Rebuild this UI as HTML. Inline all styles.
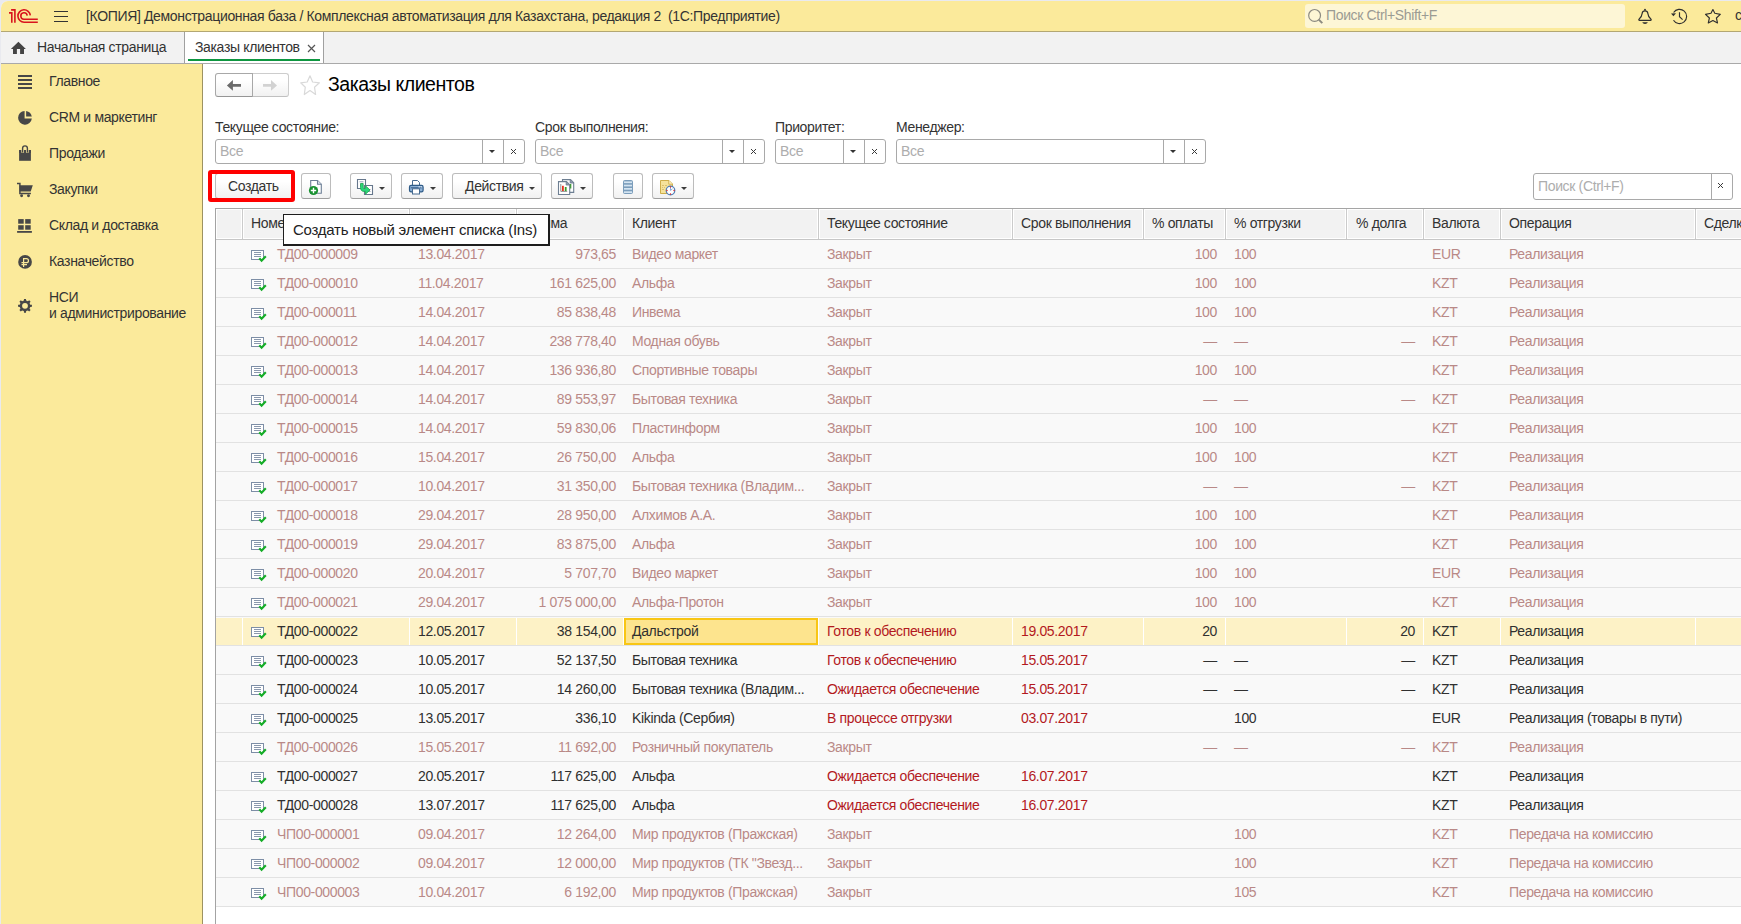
<!DOCTYPE html>
<html><head><meta charset="utf-8"><style>
*{box-sizing:border-box;margin:0;padding:0}
html,body{width:1741px;height:924px;overflow:hidden;background:#fff;font-family:"Liberation Sans",sans-serif;font-size:13.333px;color:#333}
.a{position:absolute}
.t{position:absolute;white-space:pre;line-height:16px;font-size:14px;letter-spacing:-0.35px}
.btn{position:absolute;top:173px;height:26px;border:1px solid #bcbcbc;border-bottom-color:#9f9f9f;border-radius:3px;background:linear-gradient(#ffffff 30%,#f1f1f1)}
.dd{position:absolute;width:0;height:0;border-left:3px solid transparent;border-right:3px solid transparent;border-top:3px solid #3c3c3c}
.fld{position:absolute;top:139px;height:25px;border:1px solid #a9a9a9;border-radius:3px;background:#fff}
.sep{position:absolute;top:0;width:1px;height:23px;background:#a9a9a9}
</style></head><body>
<div class="a" style="left:0;top:0;width:1741px;height:924px;background:#e9eaef"></div>
<div class="a" style="left:1px;top:1px;width:1740px;height:923px;background:#fff;border-top-left-radius:7px;overflow:hidden">
</div>
<div class="a" style="left:1px;top:1px;width:1740px;height:31px;background:#fbea9b;border-bottom:1px solid #b3a773;border-top-left-radius:7px"></div>
<svg class="a" style="left:0;top:0" width="70" height="31">
 <g fill="none" stroke="#d9141d" stroke-width="1.6">
  <path d="M9,12.9 H11.8 V22.8"/>
  <path d="M11.1,9.9 H14.9 V22.8"/>
  <path d="M30.3,15.4 A6.2,6.2 0 1 0 24.2,22.2 H37.8"/>
  <path d="M27.2,15.6 A3.2,3.2 0 1 0 24.2,19.2 H37.8"/>
 </g>
 <path d="M54,11.5 H68 M54,16.5 H68 M54,21.5 H68" stroke="#333" stroke-width="1"/>
</svg>
<div class="t" style="left:86px;top:8px;color:#333">[КОПИЯ] Демонстрационная база / Комплексная автоматизация для Казахстана, редакция 2  (1С:Предприятие)</div>
<div class="a" style="left:1305px;top:4px;width:320px;height:24px;background:#fdf6d6;border-radius:3px"></div>
<svg class="a" style="left:1300px;top:0" width="30" height="31"><circle cx="14.6" cy="15.4" r="5.9" fill="none" stroke="#8c8a80" stroke-width="1.2"/><path d="M18.8,19.6 L22.3,23.1" stroke="#8c8a80" stroke-width="2"/></svg>
<div class="t" style="left:1326px;top:7px;color:#9b9b93">Поиск Ctrl+Shift+F</div>
<svg class="a" style="left:1630px;top:0" width="111" height="31">
 <path d="M15,10.9 C13,10.9 12.3,11.8 12.1,13.6 C11.9,16 11.1,17.3 9.2,19 C8.5,19.6 8.7,20.3 9.6,20.3 H20.4 C21.3,20.3 21.5,19.6 20.8,19 C18.9,17.3 18.1,16 17.9,13.6 C17.7,11.8 17,10.9 15,10.9 Z" fill="none" stroke="#2f2f2f" stroke-width="1.15"/>
 <circle cx="15" cy="9.8" r="0.95" fill="#2f2f2f"/>
 <path d="M12.3,22.3 H17.8 C17.3,23.4 16.3,23.9 15,23.9 C13.7,23.9 12.8,23.4 12.3,22.3 Z" fill="#2f2f2f"/>
 <path d="M43.6,12.55 A7.1,7.1 0 1 1 43.5,20.2" fill="none" stroke="#2f2f2f" stroke-width="1.15"/>
 <path d="M41,13.6 L46,13.2 L43.4,16.3 Z" fill="#2f2f2f"/>
 <path d="M49.5,12.2 V16.8 L52.6,19.6" fill="none" stroke="#2f2f2f" stroke-width="1.15"/>
 <path d="M82.9,9.6 L84.8,13.3 L90.3,14.4 L86.4,18 L87.5,22.9 L82.9,20.6 L78.3,22.9 L79.4,18 L75.5,14.4 L81,13.3 Z" fill="none" stroke="#2f2f2f" stroke-width="1.15" stroke-linejoin="round"/>
</svg>
<div class="t" style="left:1735px;top:7px;color:#333">с</div>
<div class="a" style="left:1px;top:32px;width:1740px;height:32px;background:#f2f2f2;border-bottom:1px solid #a9a9a9"></div>
<svg class="a" style="left:0;top:32px" width="30" height="31"><path d="M18.4,9.8 L25.9,16.9 H24 V21.9 H20.1 V16.9 H16.9 V21.9 H13 V16.9 H10.9 Z" fill="#444"/></svg>
<div class="t" style="left:37px;top:39px;color:#333">Начальная страница</div>
<div class="a" style="left:184px;top:32px;width:140px;height:31px;background:#fff;border-left:1px solid #a0a0a0;border-right:1px solid #a0a0a0"></div>
<div class="a" style="left:188px;top:59px;width:132px;height:2px;background:#0e9640"></div>
<div class="t" style="left:195px;top:39px;color:#333">Заказы клиентов</div>
<svg class="a" style="left:304px;top:41px" width="14" height="14"><path d="M4,4 L11,11 M11,4 L4,11" stroke="#555" stroke-width="1.2"/></svg>
<div class="a" style="left:1px;top:64px;width:202px;height:860px;background:#fbea9b;border-right:1px solid #9d9261"></div>
<div class="t" style="left:49px;top:73px;color:#333">Главное</div>
<div class="t" style="left:49px;top:109px;color:#333">CRM и маркетинг</div>
<div class="t" style="left:49px;top:145px;color:#333">Продажи</div>
<div class="t" style="left:49px;top:181px;color:#333">Закупки</div>
<div class="t" style="left:49px;top:217px;color:#333">Склад и доставка</div>
<div class="t" style="left:49px;top:253px;color:#333">Казначейство</div>
<div class="t" style="left:49px;top:289px;color:#333">НСИ</div>
<div class="t" style="left:49px;top:305px;color:#333">и администрирование</div>
<svg class="a" style="left:0;top:64px" width="40" height="260">
 <g fill="#474747">
  <rect x="18" y="11" width="14" height="2"/><rect x="18" y="15" width="14" height="2"/><rect x="18" y="19" width="14" height="2"/><rect x="18" y="23" width="14" height="2"/>
  <path d="M24.6,46.91 V54.6 H31.85 A6.9,6.9 0 1 1 24.6,46.91 Z"/>
  <path d="M26.1,46.99 A6.9,6.9 0 0 1 31.79,52.6 H26.1 Z"/>
  <rect x="19.1" y="86" width="11.8" height="10.8"/>
 </g>
 <path d="M22.6,88.8 V84.3 A2.4,2.4 0 0 1 27.4,84.3 V88.8" fill="none" stroke="#fbea9b" stroke-width="3.4"/>
 <path d="M22.6,88.6 V84.3 A2.4,2.4 0 0 1 27.4,84.3 V88.6" fill="none" stroke="#474747" stroke-width="1.4"/>
 <rect x="19.1" y="86" width="2.2" height="3" fill="#474747"/><rect x="28.7" y="86" width="2.2" height="3" fill="#474747"/><rect x="24.1" y="86" width="1.8" height="3" fill="#474747"/>
 <g fill="#474747">
  <polygon points="19.6,121.3 32.8,121.3 30.7,127.6 19.6,127.6"/>
  <circle cx="21.6" cy="131.7" r="1.45"/><circle cx="28.5" cy="131.7" r="1.45"/>
  <rect x="18.2" y="155.1" width="5.5" height="4.6"/><rect x="25.2" y="155.1" width="5.5" height="4.6"/><rect x="18.2" y="161.2" width="5.5" height="4.5"/><rect x="25.2" y="161.2" width="5.5" height="4.5"/>
  <rect x="17.1" y="167" width="14.8" height="1.8"/>
  <circle cx="25.05" cy="197.95" r="6.85"/>
  <path fill-rule="evenodd" d="M30.27,240.69 L31.93,240.86 L31.93,242.84 L30.27,243.01 L29.55,244.76 L30.60,246.05 L29.20,247.45 L27.91,246.40 L26.16,247.12 L25.99,248.78 L24.01,248.78 L23.84,247.12 L22.09,246.40 L20.80,247.45 L19.40,246.05 L20.45,244.76 L19.73,243.01 L18.07,242.84 L18.07,240.86 L19.73,240.69 L20.45,238.94 L19.40,237.65 L20.80,236.25 L22.09,237.30 L23.84,236.58 L24.01,234.92 L25.99,234.92 L26.16,236.58 L27.91,237.30 L29.20,236.25 L30.60,237.65 L29.55,238.94 Z M27.9,241.85 A2.9,2.9 0 1 0 22.1,241.85 A2.9,2.9 0 1 0 27.9,241.85 Z"/>
 </g>
 <path d="M17,119.6 H19.9 V129.6 H30.9" fill="none" stroke="#474747" stroke-width="1.5"/>
 <path d="M23.6,202.9 V194.6 H26.4 A2.05,2.05 0 0 1 26.4,198.7 H21.5 M21.5,200.7 H27" fill="none" stroke="#fbea9b" stroke-width="1.2"/>
</svg>
<div class="btn" style="left:215px;top:73px;width:38px;height:24px;border-color:#a8a8a8;border-bottom-color:#959595;border-radius:3px 0 0 3px"></div>
<div class="btn" style="left:252px;top:73px;width:37px;height:24px;border-color:#cdcdcd;border-bottom-color:#c0c0c0;border-left:none;border-radius:0 3px 3px 0"></div>
<div class="a" style="left:252px;top:73px;width:1px;height:24px;background:#a8a8a8"></div>
<svg class="a" style="left:215px;top:73px" width="80" height="24">
 <path d="M11.9,12.4 L17.9,7.1 V11 H26 V13.8 H17.9 V17.7 Z" fill="#6b6b6b"/>
 <path d="M62,12.4 L56,7.1 V11 H48 V13.8 H56 V17.7 Z" fill="#d2d2d2"/>
</svg>
<svg class="a" style="left:298px;top:73px" width="24" height="24"><path d="M12,2.8 L14.6,9 L21.4,9.8 L16.5,14.2 L17.6,21.5 L12,17.5 L6.3,21.5 L7.3,14.2 L2.7,9.8 L9.2,9 Z" fill="none" stroke="#d9d9d9" stroke-width="1.2" stroke-linejoin="round"/></svg>
<div class="t" style="left:328px;top:73px;font-size:19.5px;letter-spacing:-0.45px;line-height:22px;color:#000">Заказы клиентов</div>
<div class="t" style="left:215px;top:119px;color:#333">Текущее состояние:</div>
<div class="t" style="left:535px;top:119px;color:#333">Срок выполнения:</div>
<div class="t" style="left:775px;top:119px;color:#333">Приоритет:</div>
<div class="t" style="left:896px;top:119px;color:#333">Менеджер:</div>
<div class="fld" style="left:215px;width:310px"><div class="sep" style="left:266px"></div><div class="sep" style="left:287px"></div></div>
<div class="t" style="left:220px;top:143px;color:#adadad">Все</div>
<div class="dd" style="left:489px;top:150px;border-left-width:3.5px;border-right-width:3.5px;border-top-width:3.5px;border-top-color:#333"></div>
<svg class="a" style="left:508px;top:146px" width="12" height="12"><path d="M3,3 L8,8 M8,3 L3,8" stroke="#3a3a3a" stroke-width="1"/></svg>
<div class="fld" style="left:535px;width:230px"><div class="sep" style="left:186px"></div><div class="sep" style="left:207px"></div></div>
<div class="t" style="left:540px;top:143px;color:#adadad">Все</div>
<div class="dd" style="left:729px;top:150px;border-left-width:3.5px;border-right-width:3.5px;border-top-width:3.5px;border-top-color:#333"></div>
<svg class="a" style="left:748px;top:146px" width="12" height="12"><path d="M3,3 L8,8 M8,3 L3,8" stroke="#3a3a3a" stroke-width="1"/></svg>
<div class="fld" style="left:775px;width:111px"><div class="sep" style="left:67px"></div><div class="sep" style="left:88px"></div></div>
<div class="t" style="left:780px;top:143px;color:#adadad">Все</div>
<div class="dd" style="left:850px;top:150px;border-left-width:3.5px;border-right-width:3.5px;border-top-width:3.5px;border-top-color:#333"></div>
<svg class="a" style="left:869px;top:146px" width="12" height="12"><path d="M3,3 L8,8 M8,3 L3,8" stroke="#3a3a3a" stroke-width="1"/></svg>
<div class="fld" style="left:896px;width:310px"><div class="sep" style="left:266px"></div><div class="sep" style="left:287px"></div></div>
<div class="t" style="left:901px;top:143px;color:#adadad">Все</div>
<div class="dd" style="left:1170px;top:150px;border-left-width:3.5px;border-right-width:3.5px;border-top-width:3.5px;border-top-color:#333"></div>
<svg class="a" style="left:1189px;top:146px" width="12" height="12"><path d="M3,3 L8,8 M8,3 L3,8" stroke="#3a3a3a" stroke-width="1"/></svg>
<div class="btn" style="left:215px;width:79px"></div>
<div class="t" style="left:228px;top:178px;color:#333">Создать</div>
<div class="btn" style="left:301px;width:30px"></div>
<svg class="a" style="left:301px;top:173px" width="30" height="26">
 <path d="M9.7,7.5 H16.5 L20.3,11.3 V20.3 H9.7 Z" fill="#fff" stroke="#6d7f96" stroke-width="1.1"/>
 <path d="M16.5,7.5 V11.3 H20.3" fill="#dfe5ee" stroke="#6d7f96" stroke-width="1.1"/>
 <circle cx="12.5" cy="17.5" r="4.6" fill="#17912f"/>
 <path d="M12.5,14.8 V20.2 M9.8,17.5 H15.2" stroke="#fff" stroke-width="1.4"/>
</svg>
<div class="btn" style="left:350px;width:42px"></div>
<svg class="a" style="left:350px;top:173px" width="42" height="26">
 <path d="M7.5,6.5 H15.5 V15.5 H7.5 Z" fill="#fff" stroke="#66778c" stroke-width="1.1"/>
 <path d="M9.5,8.8 H13.5" stroke="#8a9ab0" stroke-width="0.9"/>
 <path d="M14.5,12.5 H22.5 V21.5 H14.5 Z" fill="#fff" stroke="#66778c" stroke-width="1.1"/>
 <path d="M17,16.5 H20.5 M17,18.5 H20.5" stroke="#8a9ab0" stroke-width="0.9"/>
 <path d="M10.5,10.5 H13.2 V14 C13.2,15 13.8,15.5 14.6,15.5 H15.5 V12.8 L20,17 L15.5,21.2 V18.4 H14 C11.8,18.4 10.5,17 10.5,14.5 Z" fill="#2bd67a" stroke="#16a24a" stroke-width="0.8"/>
</svg>
<div class="dd" style="left:379px;top:187px"></div>
<div class="btn" style="left:401px;width:42px"></div>
<svg class="a" style="left:401px;top:173px" width="42" height="26">
 <path d="M11.5,7.5 H16.5 L18.5,9.5 V12.5 H11.5 Z" fill="#fff" stroke="#466a90" stroke-width="1"/>
 <rect x="8.5" y="12.3" width="13.6" height="6.6" rx="1.6" fill="#8cb0d6" stroke="#2f5b87" stroke-width="1.2"/>
 <path d="M9.8,14.8 H20.8" stroke="#2f5b87" stroke-width="1"/>
 <rect x="17.6" y="13.4" width="1.2" height="1" fill="#fff"/><rect x="19.6" y="13.4" width="1.2" height="1" fill="#fff"/>
 <rect x="11.5" y="15.8" width="7" height="5.2" fill="#fff" stroke="#466a90" stroke-width="1"/>
</svg>
<div class="dd" style="left:430px;top:187px"></div>
<div class="btn" style="left:452px;width:90px"></div>
<div class="t" style="left:465px;top:178px;color:#333">Действия</div>
<div class="dd" style="left:529px;top:187px"></div>
<div class="btn" style="left:551px;width:42px"></div>
<svg class="a" style="left:551px;top:173px" width="42" height="26">
 <path d="M11.5,6.6 H19.5 L22.7,9.8 V19.4 H11.5 Z" fill="#fff" stroke="#6e7f92" stroke-width="1.1"/>
 <path d="M19.2,6.6 V10 H22.7" fill="#8b9aab" stroke="#6e7f92" stroke-width="0.9"/>
 <rect x="18.5" y="11" width="1.8" height="4.5" fill="#3aa02a"/>
 <path d="M7.5,8.6 H15.5 L18.7,11.8 V21.5 H7.5 Z" fill="#fff" stroke="#6e7f92" stroke-width="1.1"/>
 <path d="M15.2,8.6 V12 H18.7" fill="#8b9aab" stroke="#6e7f92" stroke-width="0.9"/>
 <path d="M9.8,11 V18.4 H16.2" fill="none" stroke="#777" stroke-width="0.8"/>
 <rect x="11" y="12.8" width="1.8" height="5.2" fill="#e8321e"/>
 <rect x="13.8" y="14" width="1.8" height="4" fill="#3aa02a"/>
</svg>
<div class="dd" style="left:580px;top:187px"></div>
<div class="btn" style="left:613px;width:30px"></div>
<svg class="a" style="left:613px;top:173px" width="30" height="26">
 <rect x="10" y="7" width="10" height="14" rx="2" fill="#7b9dbb"/>
 <g fill="#d4e4f1"><rect x="11" y="8.4" width="8" height="1.7"/><rect x="11" y="11.7" width="8" height="1.7"/><rect x="11" y="15" width="8" height="1.7"/><rect x="11" y="18.3" width="8" height="1.7"/></g>
</svg>
<div class="btn" style="left:652px;width:42px"></div>
<svg class="a" style="left:652px;top:173px" width="42" height="26">
 <path d="M8.5,7.5 H17 L20.5,11 V20.5 H8.5 Z" fill="#f6e39a" stroke="#cfae4a" stroke-width="1"/>
 <path d="M16.8,7.5 V11.2 H20.5" fill="#fff4c8" stroke="#cfae4a" stroke-width="0.9"/>
 <path d="M10,12.5 H12 M13,12.5 H15 M10,14.5 H11 M12,14.5 H13 M10,16.5 H12" stroke="#d2b866" stroke-width="0.8"/>
 <circle cx="18.5" cy="17.5" r="4.3" fill="#fff" stroke="#4f7fb8" stroke-width="1.2"/>
 <path d="M18.5,14.5 V17.5 L20.5,15.8" stroke="#7fa0d0" stroke-width="0.9" fill="none"/>
 <g fill="#e01b1b"><circle cx="18.5" cy="14" r="0.7"/><circle cx="18.5" cy="21" r="0.7"/><circle cx="15" cy="17.5" r="0.7"/><circle cx="22" cy="17.5" r="0.7"/></g>
</svg>
<div class="dd" style="left:681px;top:187px"></div>
<div class="fld" style="left:1533px;top:173px;width:200px;height:27px"><div class="sep" style="left:177px;height:25px"></div></div>
<div class="t" style="left:1538px;top:178px;color:#adadad">Поиск (Ctrl+F)</div>
<svg class="a" style="left:1715px;top:180px" width="12" height="12"><path d="M3,3 L8,8 M8,3 L3,8" stroke="#3a3a3a" stroke-width="1"/></svg>
<div class="a" style="left:208px;top:170px;width:87px;height:32px;border:4px solid #ff0000;border-radius:3px"></div>
<div class="a" style="left:215px;top:208px;width:1526px;height:716px;border-left:1px solid #a3a3a3"></div>
<div class="a" style="left:216px;top:208px;width:1525px;height:32px;background:#fff;border-top:1px solid #a5a5a5;border-bottom:1px solid #c6c6c6"></div>
<div class="a" style="left:217px;top:210px;width:24px;height:28px;background:#f2f2f2"></div>
<div class="a" style="left:244px;top:210px;width:164px;height:28px;background:#f2f2f2"></div>
<div class="a" style="left:411px;top:210px;width:104px;height:28px;background:#f2f2f2"></div>
<div class="a" style="left:518px;top:210px;width:104px;height:28px;background:#f2f2f2"></div>
<div class="a" style="left:625px;top:210px;width:192px;height:28px;background:#f2f2f2"></div>
<div class="a" style="left:820px;top:210px;width:191px;height:28px;background:#f2f2f2"></div>
<div class="a" style="left:1014px;top:210px;width:128px;height:28px;background:#f2f2f2"></div>
<div class="a" style="left:1145px;top:210px;width:79px;height:28px;background:#f2f2f2"></div>
<div class="a" style="left:1227px;top:210px;width:118px;height:28px;background:#f2f2f2"></div>
<div class="a" style="left:1348px;top:210px;width:74px;height:28px;background:#f2f2f2"></div>
<div class="a" style="left:1425px;top:210px;width:74px;height:28px;background:#f2f2f2"></div>
<div class="a" style="left:1502px;top:210px;width:192px;height:28px;background:#f2f2f2"></div>
<div class="a" style="left:1697px;top:210px;width:45px;height:28px;background:#f2f2f2"></div>
<div class="a" style="left:242px;top:209px;width:1px;height:30px;background:#cbcbcb"></div>
<div class="a" style="left:409px;top:209px;width:1px;height:30px;background:#cbcbcb"></div>
<div class="a" style="left:516px;top:209px;width:1px;height:30px;background:#cbcbcb"></div>
<div class="a" style="left:623px;top:209px;width:1px;height:30px;background:#cbcbcb"></div>
<div class="a" style="left:818px;top:209px;width:1px;height:30px;background:#cbcbcb"></div>
<div class="a" style="left:1012px;top:209px;width:1px;height:30px;background:#cbcbcb"></div>
<div class="a" style="left:1143px;top:209px;width:1px;height:30px;background:#cbcbcb"></div>
<div class="a" style="left:1225px;top:209px;width:1px;height:30px;background:#cbcbcb"></div>
<div class="a" style="left:1346px;top:209px;width:1px;height:30px;background:#cbcbcb"></div>
<div class="a" style="left:1423px;top:209px;width:1px;height:30px;background:#cbcbcb"></div>
<div class="a" style="left:1500px;top:209px;width:1px;height:30px;background:#cbcbcb"></div>
<div class="a" style="left:1695px;top:209px;width:1px;height:30px;background:#cbcbcb"></div>
<div class="t" style="left:251px;top:215px;color:#333">Номер</div>
<div class="t" style="left:418px;top:215px;color:#333">Дата</div>
<div class="t" style="left:525px;top:215px;color:#333">Сумма</div>
<div class="t" style="left:632px;top:215px;color:#333">Клиент</div>
<div class="t" style="left:827px;top:215px;color:#333">Текущее состояние</div>
<div class="t" style="left:1021px;top:215px;color:#333">Срок выполнения</div>
<div class="t" style="left:1152px;top:215px;color:#333">% оплаты</div>
<div class="t" style="left:1234px;top:215px;color:#333">% отгрузки</div>
<div class="t" style="left:1356px;top:215px;color:#333">% долга</div>
<div class="t" style="left:1432px;top:215px;color:#333">Валюта</div>
<div class="t" style="left:1509px;top:215px;color:#333">Операция</div>
<div class="t" style="left:1704px;top:215px;color:#333">Сделка</div>
<div class="a" style="left:216px;top:240px;width:1525px;height:29px;background:#f9f9f9;border-bottom:1px solid #e2e2e2"></div>
<svg class="a" style="left:250px;top:249px" width="18" height="14">
 <rect x="1.5" y="1.5" width="12" height="9" fill="#fff" stroke="#7d8ea6" stroke-width="1"/>
 <path d="M4,3.5 H11 M4,5.5 H11 M4,7.5 H11" stroke="#8a98ad" stroke-width="1"/>
 <path d="M9.3,9.3 L11.6,11.8 L15.8,7.2" fill="none" stroke="#15ad27" stroke-width="2.1"/>
</svg>
<div class="t" style="left:277px;top:246px;color:#b98987">ТД00-000009</div>
<div class="t" style="left:418px;top:246px;color:#b98987">13.04.2017</div>
<div class="t" style="right:1125px;top:246px;text-align:right;color:#b98987">973,65</div>
<div class="t" style="left:632px;top:246px;color:#b98987">Видео маркет</div>
<div class="t" style="left:827px;top:246px;color:#b98987">Закрыт</div>
<div class="t" style="left:1021px;top:246px;color:#b98987"></div>
<div class="t" style="right:524px;top:246px;text-align:right;color:#b98987">100</div>
<div class="t" style="left:1234px;top:246px;color:#b98987">100</div>
<div class="t" style="right:326px;top:246px;text-align:right;color:#b98987"></div>
<div class="t" style="left:1432px;top:246px;color:#b98987">EUR</div>
<div class="t" style="left:1509px;top:246px;color:#b98987">Реализация</div>
<div class="a" style="left:216px;top:269px;width:1525px;height:29px;background:#f9f9f9;border-bottom:1px solid #e2e2e2"></div>
<svg class="a" style="left:250px;top:278px" width="18" height="14">
 <rect x="1.5" y="1.5" width="12" height="9" fill="#fff" stroke="#7d8ea6" stroke-width="1"/>
 <path d="M4,3.5 H11 M4,5.5 H11 M4,7.5 H11" stroke="#8a98ad" stroke-width="1"/>
 <path d="M9.3,9.3 L11.6,11.8 L15.8,7.2" fill="none" stroke="#15ad27" stroke-width="2.1"/>
</svg>
<div class="t" style="left:277px;top:275px;color:#b98987">ТД00-000010</div>
<div class="t" style="left:418px;top:275px;color:#b98987">11.04.2017</div>
<div class="t" style="right:1125px;top:275px;text-align:right;color:#b98987">161 625,00</div>
<div class="t" style="left:632px;top:275px;color:#b98987">Альфа</div>
<div class="t" style="left:827px;top:275px;color:#b98987">Закрыт</div>
<div class="t" style="left:1021px;top:275px;color:#b98987"></div>
<div class="t" style="right:524px;top:275px;text-align:right;color:#b98987">100</div>
<div class="t" style="left:1234px;top:275px;color:#b98987">100</div>
<div class="t" style="right:326px;top:275px;text-align:right;color:#b98987"></div>
<div class="t" style="left:1432px;top:275px;color:#b98987">KZT</div>
<div class="t" style="left:1509px;top:275px;color:#b98987">Реализация</div>
<div class="a" style="left:216px;top:298px;width:1525px;height:29px;background:#f9f9f9;border-bottom:1px solid #e2e2e2"></div>
<svg class="a" style="left:250px;top:307px" width="18" height="14">
 <rect x="1.5" y="1.5" width="12" height="9" fill="#fff" stroke="#7d8ea6" stroke-width="1"/>
 <path d="M4,3.5 H11 M4,5.5 H11 M4,7.5 H11" stroke="#8a98ad" stroke-width="1"/>
 <path d="M9.3,9.3 L11.6,11.8 L15.8,7.2" fill="none" stroke="#15ad27" stroke-width="2.1"/>
</svg>
<div class="t" style="left:277px;top:304px;color:#b98987">ТД00-000011</div>
<div class="t" style="left:418px;top:304px;color:#b98987">14.04.2017</div>
<div class="t" style="right:1125px;top:304px;text-align:right;color:#b98987">85 838,48</div>
<div class="t" style="left:632px;top:304px;color:#b98987">Инвема</div>
<div class="t" style="left:827px;top:304px;color:#b98987">Закрыт</div>
<div class="t" style="left:1021px;top:304px;color:#b98987"></div>
<div class="t" style="right:524px;top:304px;text-align:right;color:#b98987">100</div>
<div class="t" style="left:1234px;top:304px;color:#b98987">100</div>
<div class="t" style="right:326px;top:304px;text-align:right;color:#b98987"></div>
<div class="t" style="left:1432px;top:304px;color:#b98987">KZT</div>
<div class="t" style="left:1509px;top:304px;color:#b98987">Реализация</div>
<div class="a" style="left:216px;top:327px;width:1525px;height:29px;background:#f9f9f9;border-bottom:1px solid #e2e2e2"></div>
<svg class="a" style="left:250px;top:336px" width="18" height="14">
 <rect x="1.5" y="1.5" width="12" height="9" fill="#fff" stroke="#7d8ea6" stroke-width="1"/>
 <path d="M4,3.5 H11 M4,5.5 H11 M4,7.5 H11" stroke="#8a98ad" stroke-width="1"/>
 <path d="M9.3,9.3 L11.6,11.8 L15.8,7.2" fill="none" stroke="#15ad27" stroke-width="2.1"/>
</svg>
<div class="t" style="left:277px;top:333px;color:#b98987">ТД00-000012</div>
<div class="t" style="left:418px;top:333px;color:#b98987">14.04.2017</div>
<div class="t" style="right:1125px;top:333px;text-align:right;color:#b98987">238 778,40</div>
<div class="t" style="left:632px;top:333px;color:#b98987">Модная обувь</div>
<div class="t" style="left:827px;top:333px;color:#b98987">Закрыт</div>
<div class="t" style="left:1021px;top:333px;color:#b98987"></div>
<div class="t" style="right:524px;top:333px;text-align:right;color:#b98987">—</div>
<div class="t" style="left:1234px;top:333px;color:#b98987">—</div>
<div class="t" style="right:326px;top:333px;text-align:right;color:#b98987">—</div>
<div class="t" style="left:1432px;top:333px;color:#b98987">KZT</div>
<div class="t" style="left:1509px;top:333px;color:#b98987">Реализация</div>
<div class="a" style="left:216px;top:356px;width:1525px;height:29px;background:#f9f9f9;border-bottom:1px solid #e2e2e2"></div>
<svg class="a" style="left:250px;top:365px" width="18" height="14">
 <rect x="1.5" y="1.5" width="12" height="9" fill="#fff" stroke="#7d8ea6" stroke-width="1"/>
 <path d="M4,3.5 H11 M4,5.5 H11 M4,7.5 H11" stroke="#8a98ad" stroke-width="1"/>
 <path d="M9.3,9.3 L11.6,11.8 L15.8,7.2" fill="none" stroke="#15ad27" stroke-width="2.1"/>
</svg>
<div class="t" style="left:277px;top:362px;color:#b98987">ТД00-000013</div>
<div class="t" style="left:418px;top:362px;color:#b98987">14.04.2017</div>
<div class="t" style="right:1125px;top:362px;text-align:right;color:#b98987">136 936,80</div>
<div class="t" style="left:632px;top:362px;color:#b98987">Спортивные товары</div>
<div class="t" style="left:827px;top:362px;color:#b98987">Закрыт</div>
<div class="t" style="left:1021px;top:362px;color:#b98987"></div>
<div class="t" style="right:524px;top:362px;text-align:right;color:#b98987">100</div>
<div class="t" style="left:1234px;top:362px;color:#b98987">100</div>
<div class="t" style="right:326px;top:362px;text-align:right;color:#b98987"></div>
<div class="t" style="left:1432px;top:362px;color:#b98987">KZT</div>
<div class="t" style="left:1509px;top:362px;color:#b98987">Реализация</div>
<div class="a" style="left:216px;top:385px;width:1525px;height:29px;background:#f9f9f9;border-bottom:1px solid #e2e2e2"></div>
<svg class="a" style="left:250px;top:394px" width="18" height="14">
 <rect x="1.5" y="1.5" width="12" height="9" fill="#fff" stroke="#7d8ea6" stroke-width="1"/>
 <path d="M4,3.5 H11 M4,5.5 H11 M4,7.5 H11" stroke="#8a98ad" stroke-width="1"/>
 <path d="M9.3,9.3 L11.6,11.8 L15.8,7.2" fill="none" stroke="#15ad27" stroke-width="2.1"/>
</svg>
<div class="t" style="left:277px;top:391px;color:#b98987">ТД00-000014</div>
<div class="t" style="left:418px;top:391px;color:#b98987">14.04.2017</div>
<div class="t" style="right:1125px;top:391px;text-align:right;color:#b98987">89 553,97</div>
<div class="t" style="left:632px;top:391px;color:#b98987">Бытовая техника</div>
<div class="t" style="left:827px;top:391px;color:#b98987">Закрыт</div>
<div class="t" style="left:1021px;top:391px;color:#b98987"></div>
<div class="t" style="right:524px;top:391px;text-align:right;color:#b98987">—</div>
<div class="t" style="left:1234px;top:391px;color:#b98987">—</div>
<div class="t" style="right:326px;top:391px;text-align:right;color:#b98987">—</div>
<div class="t" style="left:1432px;top:391px;color:#b98987">KZT</div>
<div class="t" style="left:1509px;top:391px;color:#b98987">Реализация</div>
<div class="a" style="left:216px;top:414px;width:1525px;height:29px;background:#f9f9f9;border-bottom:1px solid #e2e2e2"></div>
<svg class="a" style="left:250px;top:423px" width="18" height="14">
 <rect x="1.5" y="1.5" width="12" height="9" fill="#fff" stroke="#7d8ea6" stroke-width="1"/>
 <path d="M4,3.5 H11 M4,5.5 H11 M4,7.5 H11" stroke="#8a98ad" stroke-width="1"/>
 <path d="M9.3,9.3 L11.6,11.8 L15.8,7.2" fill="none" stroke="#15ad27" stroke-width="2.1"/>
</svg>
<div class="t" style="left:277px;top:420px;color:#b98987">ТД00-000015</div>
<div class="t" style="left:418px;top:420px;color:#b98987">14.04.2017</div>
<div class="t" style="right:1125px;top:420px;text-align:right;color:#b98987">59 830,06</div>
<div class="t" style="left:632px;top:420px;color:#b98987">Пластинформ</div>
<div class="t" style="left:827px;top:420px;color:#b98987">Закрыт</div>
<div class="t" style="left:1021px;top:420px;color:#b98987"></div>
<div class="t" style="right:524px;top:420px;text-align:right;color:#b98987">100</div>
<div class="t" style="left:1234px;top:420px;color:#b98987">100</div>
<div class="t" style="right:326px;top:420px;text-align:right;color:#b98987"></div>
<div class="t" style="left:1432px;top:420px;color:#b98987">KZT</div>
<div class="t" style="left:1509px;top:420px;color:#b98987">Реализация</div>
<div class="a" style="left:216px;top:443px;width:1525px;height:29px;background:#f9f9f9;border-bottom:1px solid #e2e2e2"></div>
<svg class="a" style="left:250px;top:452px" width="18" height="14">
 <rect x="1.5" y="1.5" width="12" height="9" fill="#fff" stroke="#7d8ea6" stroke-width="1"/>
 <path d="M4,3.5 H11 M4,5.5 H11 M4,7.5 H11" stroke="#8a98ad" stroke-width="1"/>
 <path d="M9.3,9.3 L11.6,11.8 L15.8,7.2" fill="none" stroke="#15ad27" stroke-width="2.1"/>
</svg>
<div class="t" style="left:277px;top:449px;color:#b98987">ТД00-000016</div>
<div class="t" style="left:418px;top:449px;color:#b98987">15.04.2017</div>
<div class="t" style="right:1125px;top:449px;text-align:right;color:#b98987">26 750,00</div>
<div class="t" style="left:632px;top:449px;color:#b98987">Альфа</div>
<div class="t" style="left:827px;top:449px;color:#b98987">Закрыт</div>
<div class="t" style="left:1021px;top:449px;color:#b98987"></div>
<div class="t" style="right:524px;top:449px;text-align:right;color:#b98987">100</div>
<div class="t" style="left:1234px;top:449px;color:#b98987">100</div>
<div class="t" style="right:326px;top:449px;text-align:right;color:#b98987"></div>
<div class="t" style="left:1432px;top:449px;color:#b98987">KZT</div>
<div class="t" style="left:1509px;top:449px;color:#b98987">Реализация</div>
<div class="a" style="left:216px;top:472px;width:1525px;height:29px;background:#f9f9f9;border-bottom:1px solid #e2e2e2"></div>
<svg class="a" style="left:250px;top:481px" width="18" height="14">
 <rect x="1.5" y="1.5" width="12" height="9" fill="#fff" stroke="#7d8ea6" stroke-width="1"/>
 <path d="M4,3.5 H11 M4,5.5 H11 M4,7.5 H11" stroke="#8a98ad" stroke-width="1"/>
 <path d="M9.3,9.3 L11.6,11.8 L15.8,7.2" fill="none" stroke="#15ad27" stroke-width="2.1"/>
</svg>
<div class="t" style="left:277px;top:478px;color:#b98987">ТД00-000017</div>
<div class="t" style="left:418px;top:478px;color:#b98987">10.04.2017</div>
<div class="t" style="right:1125px;top:478px;text-align:right;color:#b98987">31 350,00</div>
<div class="t" style="left:632px;top:478px;color:#b98987">Бытовая техника (Владим...</div>
<div class="t" style="left:827px;top:478px;color:#b98987">Закрыт</div>
<div class="t" style="left:1021px;top:478px;color:#b98987"></div>
<div class="t" style="right:524px;top:478px;text-align:right;color:#b98987">—</div>
<div class="t" style="left:1234px;top:478px;color:#b98987">—</div>
<div class="t" style="right:326px;top:478px;text-align:right;color:#b98987">—</div>
<div class="t" style="left:1432px;top:478px;color:#b98987">KZT</div>
<div class="t" style="left:1509px;top:478px;color:#b98987">Реализация</div>
<div class="a" style="left:216px;top:501px;width:1525px;height:29px;background:#f9f9f9;border-bottom:1px solid #e2e2e2"></div>
<svg class="a" style="left:250px;top:510px" width="18" height="14">
 <rect x="1.5" y="1.5" width="12" height="9" fill="#fff" stroke="#7d8ea6" stroke-width="1"/>
 <path d="M4,3.5 H11 M4,5.5 H11 M4,7.5 H11" stroke="#8a98ad" stroke-width="1"/>
 <path d="M9.3,9.3 L11.6,11.8 L15.8,7.2" fill="none" stroke="#15ad27" stroke-width="2.1"/>
</svg>
<div class="t" style="left:277px;top:507px;color:#b98987">ТД00-000018</div>
<div class="t" style="left:418px;top:507px;color:#b98987">29.04.2017</div>
<div class="t" style="right:1125px;top:507px;text-align:right;color:#b98987">28 950,00</div>
<div class="t" style="left:632px;top:507px;color:#b98987">Алхимов А.А.</div>
<div class="t" style="left:827px;top:507px;color:#b98987">Закрыт</div>
<div class="t" style="left:1021px;top:507px;color:#b98987"></div>
<div class="t" style="right:524px;top:507px;text-align:right;color:#b98987">100</div>
<div class="t" style="left:1234px;top:507px;color:#b98987">100</div>
<div class="t" style="right:326px;top:507px;text-align:right;color:#b98987"></div>
<div class="t" style="left:1432px;top:507px;color:#b98987">KZT</div>
<div class="t" style="left:1509px;top:507px;color:#b98987">Реализация</div>
<div class="a" style="left:216px;top:530px;width:1525px;height:29px;background:#f9f9f9;border-bottom:1px solid #e2e2e2"></div>
<svg class="a" style="left:250px;top:539px" width="18" height="14">
 <rect x="1.5" y="1.5" width="12" height="9" fill="#fff" stroke="#7d8ea6" stroke-width="1"/>
 <path d="M4,3.5 H11 M4,5.5 H11 M4,7.5 H11" stroke="#8a98ad" stroke-width="1"/>
 <path d="M9.3,9.3 L11.6,11.8 L15.8,7.2" fill="none" stroke="#15ad27" stroke-width="2.1"/>
</svg>
<div class="t" style="left:277px;top:536px;color:#b98987">ТД00-000019</div>
<div class="t" style="left:418px;top:536px;color:#b98987">29.04.2017</div>
<div class="t" style="right:1125px;top:536px;text-align:right;color:#b98987">83 875,00</div>
<div class="t" style="left:632px;top:536px;color:#b98987">Альфа</div>
<div class="t" style="left:827px;top:536px;color:#b98987">Закрыт</div>
<div class="t" style="left:1021px;top:536px;color:#b98987"></div>
<div class="t" style="right:524px;top:536px;text-align:right;color:#b98987">100</div>
<div class="t" style="left:1234px;top:536px;color:#b98987">100</div>
<div class="t" style="right:326px;top:536px;text-align:right;color:#b98987"></div>
<div class="t" style="left:1432px;top:536px;color:#b98987">KZT</div>
<div class="t" style="left:1509px;top:536px;color:#b98987">Реализация</div>
<div class="a" style="left:216px;top:559px;width:1525px;height:29px;background:#f9f9f9;border-bottom:1px solid #e2e2e2"></div>
<svg class="a" style="left:250px;top:568px" width="18" height="14">
 <rect x="1.5" y="1.5" width="12" height="9" fill="#fff" stroke="#7d8ea6" stroke-width="1"/>
 <path d="M4,3.5 H11 M4,5.5 H11 M4,7.5 H11" stroke="#8a98ad" stroke-width="1"/>
 <path d="M9.3,9.3 L11.6,11.8 L15.8,7.2" fill="none" stroke="#15ad27" stroke-width="2.1"/>
</svg>
<div class="t" style="left:277px;top:565px;color:#b98987">ТД00-000020</div>
<div class="t" style="left:418px;top:565px;color:#b98987">20.04.2017</div>
<div class="t" style="right:1125px;top:565px;text-align:right;color:#b98987">5 707,70</div>
<div class="t" style="left:632px;top:565px;color:#b98987">Видео маркет</div>
<div class="t" style="left:827px;top:565px;color:#b98987">Закрыт</div>
<div class="t" style="left:1021px;top:565px;color:#b98987"></div>
<div class="t" style="right:524px;top:565px;text-align:right;color:#b98987">100</div>
<div class="t" style="left:1234px;top:565px;color:#b98987">100</div>
<div class="t" style="right:326px;top:565px;text-align:right;color:#b98987"></div>
<div class="t" style="left:1432px;top:565px;color:#b98987">EUR</div>
<div class="t" style="left:1509px;top:565px;color:#b98987">Реализация</div>
<div class="a" style="left:216px;top:588px;width:1525px;height:29px;background:#f9f9f9;border-bottom:1px solid #e2e2e2"></div>
<svg class="a" style="left:250px;top:597px" width="18" height="14">
 <rect x="1.5" y="1.5" width="12" height="9" fill="#fff" stroke="#7d8ea6" stroke-width="1"/>
 <path d="M4,3.5 H11 M4,5.5 H11 M4,7.5 H11" stroke="#8a98ad" stroke-width="1"/>
 <path d="M9.3,9.3 L11.6,11.8 L15.8,7.2" fill="none" stroke="#15ad27" stroke-width="2.1"/>
</svg>
<div class="t" style="left:277px;top:594px;color:#b98987">ТД00-000021</div>
<div class="t" style="left:418px;top:594px;color:#b98987">29.04.2017</div>
<div class="t" style="right:1125px;top:594px;text-align:right;color:#b98987">1 075 000,00</div>
<div class="t" style="left:632px;top:594px;color:#b98987">Альфа-Протон</div>
<div class="t" style="left:827px;top:594px;color:#b98987">Закрыт</div>
<div class="t" style="left:1021px;top:594px;color:#b98987"></div>
<div class="t" style="right:524px;top:594px;text-align:right;color:#b98987">100</div>
<div class="t" style="left:1234px;top:594px;color:#b98987">100</div>
<div class="t" style="right:326px;top:594px;text-align:right;color:#b98987"></div>
<div class="t" style="left:1432px;top:594px;color:#b98987">KZT</div>
<div class="t" style="left:1509px;top:594px;color:#b98987">Реализация</div>
<div class="a" style="left:216px;top:617px;width:1525px;height:29px;background:#f9f9f9;border-bottom:1px solid #e2e2e2"></div>
<div class="a" style="left:216px;top:618px;width:1525px;height:27px;background:#fdf2c6"></div>
<div class="a" style="left:242px;top:618px;width:1px;height:27px;background:#fff"></div>
<div class="a" style="left:409px;top:618px;width:1px;height:27px;background:#fff"></div>
<div class="a" style="left:516px;top:618px;width:1px;height:27px;background:#fff"></div>
<div class="a" style="left:623px;top:618px;width:1px;height:27px;background:#fff"></div>
<div class="a" style="left:818px;top:618px;width:1px;height:27px;background:#fff"></div>
<div class="a" style="left:1012px;top:618px;width:1px;height:27px;background:#fff"></div>
<div class="a" style="left:1143px;top:618px;width:1px;height:27px;background:#fff"></div>
<div class="a" style="left:1225px;top:618px;width:1px;height:27px;background:#fff"></div>
<div class="a" style="left:1346px;top:618px;width:1px;height:27px;background:#fff"></div>
<div class="a" style="left:1423px;top:618px;width:1px;height:27px;background:#fff"></div>
<div class="a" style="left:1500px;top:618px;width:1px;height:27px;background:#fff"></div>
<div class="a" style="left:1695px;top:618px;width:1px;height:27px;background:#fff"></div>
<div class="a" style="left:624px;top:618px;width:194px;height:27px;background:#fde48e;border:2px solid #f8c615"></div>
<svg class="a" style="left:250px;top:626px" width="18" height="14">
 <rect x="1.5" y="1.5" width="12" height="9" fill="#fff" stroke="#7d8ea6" stroke-width="1"/>
 <path d="M4,3.5 H11 M4,5.5 H11 M4,7.5 H11" stroke="#8a98ad" stroke-width="1"/>
 <path d="M9.3,9.3 L11.6,11.8 L15.8,7.2" fill="none" stroke="#15ad27" stroke-width="2.1"/>
</svg>
<div class="t" style="left:277px;top:623px;color:#303030">ТД00-000022</div>
<div class="t" style="left:418px;top:623px;color:#303030">12.05.2017</div>
<div class="t" style="right:1125px;top:623px;text-align:right;color:#303030">38 154,00</div>
<div class="t" style="left:632px;top:623px;color:#303030">Дальстрой</div>
<div class="t" style="left:827px;top:623px;color:#b3191e">Готов к обеспечению</div>
<div class="t" style="left:1021px;top:623px;color:#b3191e">19.05.2017</div>
<div class="t" style="right:524px;top:623px;text-align:right;color:#303030">20</div>
<div class="t" style="left:1234px;top:623px;color:#303030"></div>
<div class="t" style="right:326px;top:623px;text-align:right;color:#303030">20</div>
<div class="t" style="left:1432px;top:623px;color:#303030">KZT</div>
<div class="t" style="left:1509px;top:623px;color:#303030">Реализация</div>
<div class="a" style="left:216px;top:646px;width:1525px;height:29px;background:#f9f9f9;border-bottom:1px solid #e2e2e2"></div>
<svg class="a" style="left:250px;top:655px" width="18" height="14">
 <rect x="1.5" y="1.5" width="12" height="9" fill="#fff" stroke="#7d8ea6" stroke-width="1"/>
 <path d="M4,3.5 H11 M4,5.5 H11 M4,7.5 H11" stroke="#8a98ad" stroke-width="1"/>
 <path d="M9.3,9.3 L11.6,11.8 L15.8,7.2" fill="none" stroke="#15ad27" stroke-width="2.1"/>
</svg>
<div class="t" style="left:277px;top:652px;color:#303030">ТД00-000023</div>
<div class="t" style="left:418px;top:652px;color:#303030">10.05.2017</div>
<div class="t" style="right:1125px;top:652px;text-align:right;color:#303030">52 137,50</div>
<div class="t" style="left:632px;top:652px;color:#303030">Бытовая техника</div>
<div class="t" style="left:827px;top:652px;color:#b3191e">Готов к обеспечению</div>
<div class="t" style="left:1021px;top:652px;color:#b3191e">15.05.2017</div>
<div class="t" style="right:524px;top:652px;text-align:right;color:#303030">—</div>
<div class="t" style="left:1234px;top:652px;color:#303030">—</div>
<div class="t" style="right:326px;top:652px;text-align:right;color:#303030">—</div>
<div class="t" style="left:1432px;top:652px;color:#303030">KZT</div>
<div class="t" style="left:1509px;top:652px;color:#303030">Реализация</div>
<div class="a" style="left:216px;top:675px;width:1525px;height:29px;background:#f9f9f9;border-bottom:1px solid #e2e2e2"></div>
<svg class="a" style="left:250px;top:684px" width="18" height="14">
 <rect x="1.5" y="1.5" width="12" height="9" fill="#fff" stroke="#7d8ea6" stroke-width="1"/>
 <path d="M4,3.5 H11 M4,5.5 H11 M4,7.5 H11" stroke="#8a98ad" stroke-width="1"/>
 <path d="M9.3,9.3 L11.6,11.8 L15.8,7.2" fill="none" stroke="#15ad27" stroke-width="2.1"/>
</svg>
<div class="t" style="left:277px;top:681px;color:#303030">ТД00-000024</div>
<div class="t" style="left:418px;top:681px;color:#303030">10.05.2017</div>
<div class="t" style="right:1125px;top:681px;text-align:right;color:#303030">14 260,00</div>
<div class="t" style="left:632px;top:681px;color:#303030">Бытовая техника (Владим...</div>
<div class="t" style="left:827px;top:681px;color:#b3191e">Ожидается обеспечение</div>
<div class="t" style="left:1021px;top:681px;color:#b3191e">15.05.2017</div>
<div class="t" style="right:524px;top:681px;text-align:right;color:#303030">—</div>
<div class="t" style="left:1234px;top:681px;color:#303030">—</div>
<div class="t" style="right:326px;top:681px;text-align:right;color:#303030">—</div>
<div class="t" style="left:1432px;top:681px;color:#303030">KZT</div>
<div class="t" style="left:1509px;top:681px;color:#303030">Реализация</div>
<div class="a" style="left:216px;top:704px;width:1525px;height:29px;background:#f9f9f9;border-bottom:1px solid #e2e2e2"></div>
<svg class="a" style="left:250px;top:713px" width="18" height="14">
 <rect x="1.5" y="1.5" width="12" height="9" fill="#fff" stroke="#7d8ea6" stroke-width="1"/>
 <path d="M4,3.5 H11 M4,5.5 H11 M4,7.5 H11" stroke="#8a98ad" stroke-width="1"/>
 <path d="M9.3,9.3 L11.6,11.8 L15.8,7.2" fill="none" stroke="#15ad27" stroke-width="2.1"/>
</svg>
<div class="t" style="left:277px;top:710px;color:#303030">ТД00-000025</div>
<div class="t" style="left:418px;top:710px;color:#303030">13.05.2017</div>
<div class="t" style="right:1125px;top:710px;text-align:right;color:#303030">336,10</div>
<div class="t" style="left:632px;top:710px;color:#303030">Kikinda (Сербия)</div>
<div class="t" style="left:827px;top:710px;color:#b3191e">В процессе отгрузки</div>
<div class="t" style="left:1021px;top:710px;color:#b3191e">03.07.2017</div>
<div class="t" style="right:524px;top:710px;text-align:right;color:#303030"></div>
<div class="t" style="left:1234px;top:710px;color:#303030">100</div>
<div class="t" style="right:326px;top:710px;text-align:right;color:#303030"></div>
<div class="t" style="left:1432px;top:710px;color:#303030">EUR</div>
<div class="t" style="left:1509px;top:710px;color:#303030">Реализация (товары в пути)</div>
<div class="a" style="left:216px;top:733px;width:1525px;height:29px;background:#f9f9f9;border-bottom:1px solid #e2e2e2"></div>
<svg class="a" style="left:250px;top:742px" width="18" height="14">
 <rect x="1.5" y="1.5" width="12" height="9" fill="#fff" stroke="#7d8ea6" stroke-width="1"/>
 <path d="M4,3.5 H11 M4,5.5 H11 M4,7.5 H11" stroke="#8a98ad" stroke-width="1"/>
 <path d="M9.3,9.3 L11.6,11.8 L15.8,7.2" fill="none" stroke="#15ad27" stroke-width="2.1"/>
</svg>
<div class="t" style="left:277px;top:739px;color:#b98987">ТД00-000026</div>
<div class="t" style="left:418px;top:739px;color:#b98987">15.05.2017</div>
<div class="t" style="right:1125px;top:739px;text-align:right;color:#b98987">11 692,00</div>
<div class="t" style="left:632px;top:739px;color:#b98987">Розничный покупатель</div>
<div class="t" style="left:827px;top:739px;color:#b98987">Закрыт</div>
<div class="t" style="left:1021px;top:739px;color:#b98987"></div>
<div class="t" style="right:524px;top:739px;text-align:right;color:#b98987">—</div>
<div class="t" style="left:1234px;top:739px;color:#b98987">—</div>
<div class="t" style="right:326px;top:739px;text-align:right;color:#b98987">—</div>
<div class="t" style="left:1432px;top:739px;color:#b98987">KZT</div>
<div class="t" style="left:1509px;top:739px;color:#b98987">Реализация</div>
<div class="a" style="left:216px;top:762px;width:1525px;height:29px;background:#f9f9f9;border-bottom:1px solid #e2e2e2"></div>
<svg class="a" style="left:250px;top:771px" width="18" height="14">
 <rect x="1.5" y="1.5" width="12" height="9" fill="#fff" stroke="#7d8ea6" stroke-width="1"/>
 <path d="M4,3.5 H11 M4,5.5 H11 M4,7.5 H11" stroke="#8a98ad" stroke-width="1"/>
 <path d="M9.3,9.3 L11.6,11.8 L15.8,7.2" fill="none" stroke="#15ad27" stroke-width="2.1"/>
</svg>
<div class="t" style="left:277px;top:768px;color:#303030">ТД00-000027</div>
<div class="t" style="left:418px;top:768px;color:#303030">20.05.2017</div>
<div class="t" style="right:1125px;top:768px;text-align:right;color:#303030">117 625,00</div>
<div class="t" style="left:632px;top:768px;color:#303030">Альфа</div>
<div class="t" style="left:827px;top:768px;color:#b3191e">Ожидается обеспечение</div>
<div class="t" style="left:1021px;top:768px;color:#b3191e">16.07.2017</div>
<div class="t" style="right:524px;top:768px;text-align:right;color:#303030"></div>
<div class="t" style="left:1234px;top:768px;color:#303030"></div>
<div class="t" style="right:326px;top:768px;text-align:right;color:#303030"></div>
<div class="t" style="left:1432px;top:768px;color:#303030">KZT</div>
<div class="t" style="left:1509px;top:768px;color:#303030">Реализация</div>
<div class="a" style="left:216px;top:791px;width:1525px;height:29px;background:#f9f9f9;border-bottom:1px solid #e2e2e2"></div>
<svg class="a" style="left:250px;top:800px" width="18" height="14">
 <rect x="1.5" y="1.5" width="12" height="9" fill="#fff" stroke="#7d8ea6" stroke-width="1"/>
 <path d="M4,3.5 H11 M4,5.5 H11 M4,7.5 H11" stroke="#8a98ad" stroke-width="1"/>
 <path d="M9.3,9.3 L11.6,11.8 L15.8,7.2" fill="none" stroke="#15ad27" stroke-width="2.1"/>
</svg>
<div class="t" style="left:277px;top:797px;color:#303030">ТД00-000028</div>
<div class="t" style="left:418px;top:797px;color:#303030">13.07.2017</div>
<div class="t" style="right:1125px;top:797px;text-align:right;color:#303030">117 625,00</div>
<div class="t" style="left:632px;top:797px;color:#303030">Альфа</div>
<div class="t" style="left:827px;top:797px;color:#b3191e">Ожидается обеспечение</div>
<div class="t" style="left:1021px;top:797px;color:#b3191e">16.07.2017</div>
<div class="t" style="right:524px;top:797px;text-align:right;color:#303030"></div>
<div class="t" style="left:1234px;top:797px;color:#303030"></div>
<div class="t" style="right:326px;top:797px;text-align:right;color:#303030"></div>
<div class="t" style="left:1432px;top:797px;color:#303030">KZT</div>
<div class="t" style="left:1509px;top:797px;color:#303030">Реализация</div>
<div class="a" style="left:216px;top:820px;width:1525px;height:29px;background:#f9f9f9;border-bottom:1px solid #e2e2e2"></div>
<svg class="a" style="left:250px;top:829px" width="18" height="14">
 <rect x="1.5" y="1.5" width="12" height="9" fill="#fff" stroke="#7d8ea6" stroke-width="1"/>
 <path d="M4,3.5 H11 M4,5.5 H11 M4,7.5 H11" stroke="#8a98ad" stroke-width="1"/>
 <path d="M9.3,9.3 L11.6,11.8 L15.8,7.2" fill="none" stroke="#15ad27" stroke-width="2.1"/>
</svg>
<div class="t" style="left:277px;top:826px;color:#b98987">ЧП00-000001</div>
<div class="t" style="left:418px;top:826px;color:#b98987">09.04.2017</div>
<div class="t" style="right:1125px;top:826px;text-align:right;color:#b98987">12 264,00</div>
<div class="t" style="left:632px;top:826px;color:#b98987">Мир продуктов (Пражская)</div>
<div class="t" style="left:827px;top:826px;color:#b98987">Закрыт</div>
<div class="t" style="left:1021px;top:826px;color:#b98987"></div>
<div class="t" style="right:524px;top:826px;text-align:right;color:#b98987"></div>
<div class="t" style="left:1234px;top:826px;color:#b98987">100</div>
<div class="t" style="right:326px;top:826px;text-align:right;color:#b98987"></div>
<div class="t" style="left:1432px;top:826px;color:#b98987">KZT</div>
<div class="t" style="left:1509px;top:826px;color:#b98987">Передача на комиссию</div>
<div class="a" style="left:216px;top:849px;width:1525px;height:29px;background:#f9f9f9;border-bottom:1px solid #e2e2e2"></div>
<svg class="a" style="left:250px;top:858px" width="18" height="14">
 <rect x="1.5" y="1.5" width="12" height="9" fill="#fff" stroke="#7d8ea6" stroke-width="1"/>
 <path d="M4,3.5 H11 M4,5.5 H11 M4,7.5 H11" stroke="#8a98ad" stroke-width="1"/>
 <path d="M9.3,9.3 L11.6,11.8 L15.8,7.2" fill="none" stroke="#15ad27" stroke-width="2.1"/>
</svg>
<div class="t" style="left:277px;top:855px;color:#b98987">ЧП00-000002</div>
<div class="t" style="left:418px;top:855px;color:#b98987">09.04.2017</div>
<div class="t" style="right:1125px;top:855px;text-align:right;color:#b98987">12 000,00</div>
<div class="t" style="left:632px;top:855px;color:#b98987">Мир продуктов (ТК &quot;Звезд...</div>
<div class="t" style="left:827px;top:855px;color:#b98987">Закрыт</div>
<div class="t" style="left:1021px;top:855px;color:#b98987"></div>
<div class="t" style="right:524px;top:855px;text-align:right;color:#b98987"></div>
<div class="t" style="left:1234px;top:855px;color:#b98987">100</div>
<div class="t" style="right:326px;top:855px;text-align:right;color:#b98987"></div>
<div class="t" style="left:1432px;top:855px;color:#b98987">KZT</div>
<div class="t" style="left:1509px;top:855px;color:#b98987">Передача на комиссию</div>
<div class="a" style="left:216px;top:878px;width:1525px;height:29px;background:#f9f9f9;border-bottom:1px solid #e2e2e2"></div>
<svg class="a" style="left:250px;top:887px" width="18" height="14">
 <rect x="1.5" y="1.5" width="12" height="9" fill="#fff" stroke="#7d8ea6" stroke-width="1"/>
 <path d="M4,3.5 H11 M4,5.5 H11 M4,7.5 H11" stroke="#8a98ad" stroke-width="1"/>
 <path d="M9.3,9.3 L11.6,11.8 L15.8,7.2" fill="none" stroke="#15ad27" stroke-width="2.1"/>
</svg>
<div class="t" style="left:277px;top:884px;color:#b98987">ЧП00-000003</div>
<div class="t" style="left:418px;top:884px;color:#b98987">10.04.2017</div>
<div class="t" style="right:1125px;top:884px;text-align:right;color:#b98987">6 192,00</div>
<div class="t" style="left:632px;top:884px;color:#b98987">Мир продуктов (Пражская)</div>
<div class="t" style="left:827px;top:884px;color:#b98987">Закрыт</div>
<div class="t" style="left:1021px;top:884px;color:#b98987"></div>
<div class="t" style="right:524px;top:884px;text-align:right;color:#b98987"></div>
<div class="t" style="left:1234px;top:884px;color:#b98987">105</div>
<div class="t" style="right:326px;top:884px;text-align:right;color:#b98987"></div>
<div class="t" style="left:1432px;top:884px;color:#b98987">KZT</div>
<div class="t" style="left:1509px;top:884px;color:#b98987">Передача на комиссию</div>
<div class="a" style="left:283px;top:214px;width:267px;height:32px;background:#fff;border:1px solid #1e1e1e;border-bottom-width:2px;border-right-width:2px"></div>
<div class="t" style="left:293px;top:221px;font-size:15px;letter-spacing:-0.25px;line-height:17px;color:#222">Создать новый элемент списка (Ins)</div>
</body></html>
